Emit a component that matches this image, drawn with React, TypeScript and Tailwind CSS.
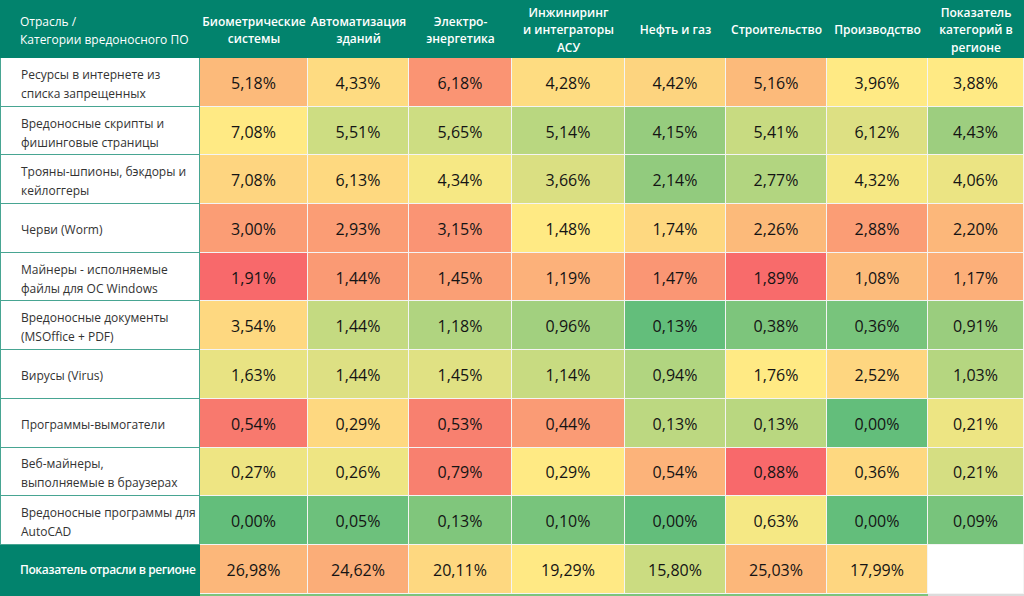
import React from "react";

const headers = [
  ["Биометрические", "системы"],
  ["Автоматизация", "зданий"],
  ["Электро-", "энергетика"],
  ["Инжиниринг", "и интеграторы", "АСУ"],
  ["Нефть и газ"],
  ["Строительство"],
  ["Производство"],
  ["Показатель", "категорий в", "регионе"],
];

type Cell = [string, string];

const rows: { label: string[]; cells: Cell[] }[] = [
  {
    label: ["Ресурсы в интернете из", "списка запрещенных"],
    cells: [
      ["5,18%", "#fcba7a"], ["4,33%", "#fedb81"], ["6,18%", "#fa9473"], ["4,28%", "#fedc81"],
      ["4,42%", "#fdd47f"], ["5,16%", "#fcba7a"], ["3,96%", "#ffea84"], ["3,88%", "#ffea84"],
    ],
  },
  {
    label: ["Вредоносные скрипты и", "фишинговые страницы"],
    cells: [
      ["7,08%", "#ffea84"], ["5,51%", "#cddd82"], ["5,65%", "#cddd82"], ["5,14%", "#b9d780"],
      ["4,15%", "#96cc7e"], ["5,41%", "#c8db81"], ["6,12%", "#dde083"], ["4,43%", "#9dce7f"],
    ],
  },
  {
    label: ["Трояны-шпионы, бэкдоры и", "кейлоггеры"],
    cells: [
      ["7,08%", "#fed580"], ["6,13%", "#fed980"], ["4,34%", "#f6e884"], ["3,66%", "#dadf82"],
      ["2,14%", "#92cb7e"], ["2,77%", "#b2d580"], ["4,32%", "#f6e884"], ["4,06%", "#ebe483"],
    ],
  },
  {
    label: ["Черви (Worm)"],
    cells: [
      ["3,00%", "#fb9d75"], ["2,93%", "#fb9d75"], ["3,15%", "#fa9474"], ["1,48%", "#ffea84"],
      ["1,74%", "#fed880"], ["2,26%", "#fcba7a"], ["2,88%", "#fb9d75"], ["2,20%", "#fcb77a"],
    ],
  },
  {
    label: ["Майнеры - исполняемые", "файлы для ОС Windows"],
    cells: [
      ["1,91%", "#f8696b"], ["1,44%", "#fa9a74"], ["1,45%", "#fa9f75"], ["1,19%", "#fcb17a"],
      ["1,47%", "#fa9674"], ["1,89%", "#f86b6b"], ["1,08%", "#fcbb7b"], ["1,17%", "#fcaf79"],
    ],
  },
  {
    label: ["Вредоносные документы", "(MSOffice + PDF)"],
    cells: [
      ["3,54%", "#fed880"], ["1,44%", "#c4da81"], ["1,18%", "#b0d480"], ["0,96%", "#a2d07f"],
      ["0,13%", "#63be7b"], ["0,38%", "#7dc57c"], ["0,36%", "#78c47c"], ["0,91%", "#9acd7e"],
    ],
  },
  {
    label: ["Вирусы (Virus)"],
    cells: [
      ["1,63%", "#e8e383"], ["1,44%", "#dde083"], ["1,45%", "#e0e183"], ["1,14%", "#c8db81"],
      ["0,94%", "#b1d580"], ["1,76%", "#ffea84"], ["2,52%", "#fed680"], ["1,03%", "#b5d680"],
    ],
  },
  {
    label: ["Программы-вымогатели"],
    cells: [
      ["0,54%", "#f8796e"], ["0,29%", "#fed880"], ["0,53%", "#f8806f"], ["0,44%", "#fa9b75"],
      ["0,13%", "#bcd881"], ["0,13%", "#b9d780"], ["0,00%", "#63be7b"], ["0,21%", "#ede583"],
    ],
  },
  {
    label: ["Веб-майнеры,", "выполняемые в браузерах"],
    cells: [
      ["0,27%", "#eee583"], ["0,26%", "#eee583"], ["0,79%", "#f8806f"], ["0,29%", "#ffea84"],
      ["0,54%", "#fcb37a"], ["0,88%", "#f8696b"], ["0,36%", "#fed880"], ["0,21%", "#d5de82"],
    ],
  },
  {
    label: ["Вредоносные программы для", "AutoCAD"],
    cells: [
      ["0,00%", "#63be7b"], ["0,05%", "#6dc17c"], ["0,13%", "#80c67c"], ["0,10%", "#78c47c"],
      ["0,00%", "#63be7b"], ["0,63%", "#f5e884"], ["0,00%", "#63be7b"], ["0,09%", "#78c47c"],
    ],
  },
];

const totals: Cell[] = [
  ["26,98%", "#fcb77a"], ["24,62%", "#fbad78"], ["20,11%", "#fed880"], ["19,29%", "#ffe984"],
  ["15,80%", "#cbdc81"], ["25,03%", "#fcb77a"], ["17,99%", "#fed680"], ["", "#ffffff"],
];

const cols =
  "grid grid-cols-[200px_108px_101px_103px_113px_101px_101px_101px_1fr]";

const ValueCell = ({ c }: { c: Cell }) => (
  <div
    className="flex items-center justify-center pt-[2px] border-r border-b border-[#f4f4f4] text-[16px] text-[#141414]"
    style={{ backgroundColor: c[1] }}
  >
    {c[0]}
  </div>
);

export default function App() {
  return (
    <div className="w-[1024px] h-[596px] overflow-hidden bg-white font-['Open_Sans',sans-serif]">
      {/* HEADER */}
      <div className={`${cols} h-[58px] bg-[#02836d] text-white text-[12px] font-semibold leading-[17.5px]`}>
        <div className="flex flex-col justify-center pl-5 pt-1 font-normal leading-[18px]">
          <span>Отрасль /</span>
          <span>Категории вредоносного ПО</span>
        </div>
        {headers.map((h, i) => (
          <div key={i} className="flex flex-col items-center justify-center pt-[2px] text-center">
            {h.map((l, j) => (
              <span key={j}>{l}</span>
            ))}
          </div>
        ))}
      </div>

      {/* ROWS */}
      {rows.map((r, i) => (
        <div key={i} className={`${cols} h-[48.7px]`}>
          <div className="flex flex-col justify-center pl-5 pt-[4px] text-[12px] leading-[19px] text-[#333] border-l border-r border-b border-[#47a592]">
            {r.label.map((l, j) => (
              <span key={j}>{l}</span>
            ))}
          </div>
          {r.cells.map((c, j) => (
            <ValueCell key={j} c={c} />
          ))}
        </div>
      ))}

      {/* TOTALS */}
      <div className={`${cols} h-[48.7px]`}>
        <div className="flex items-center pl-5 pt-[2px] bg-[#02836d] text-white text-[12px] font-semibold tracking-[-0.4px] whitespace-nowrap">
          Показатель отрасли в регионе
        </div>
        {totals.map((c, j) => (
          <ValueCell key={j} c={c} />
        ))}
      </div>

      {/* NEXT ROW EDGE */}
      <div className={`${cols} h-[4px]`}>
        <div className="bg-[#02836d]" />
        <div className="col-span-7 bg-[#7cc47c]" />
        <div className="bg-[#dcdcdc]" />
      </div>
    </div>
  );
}
